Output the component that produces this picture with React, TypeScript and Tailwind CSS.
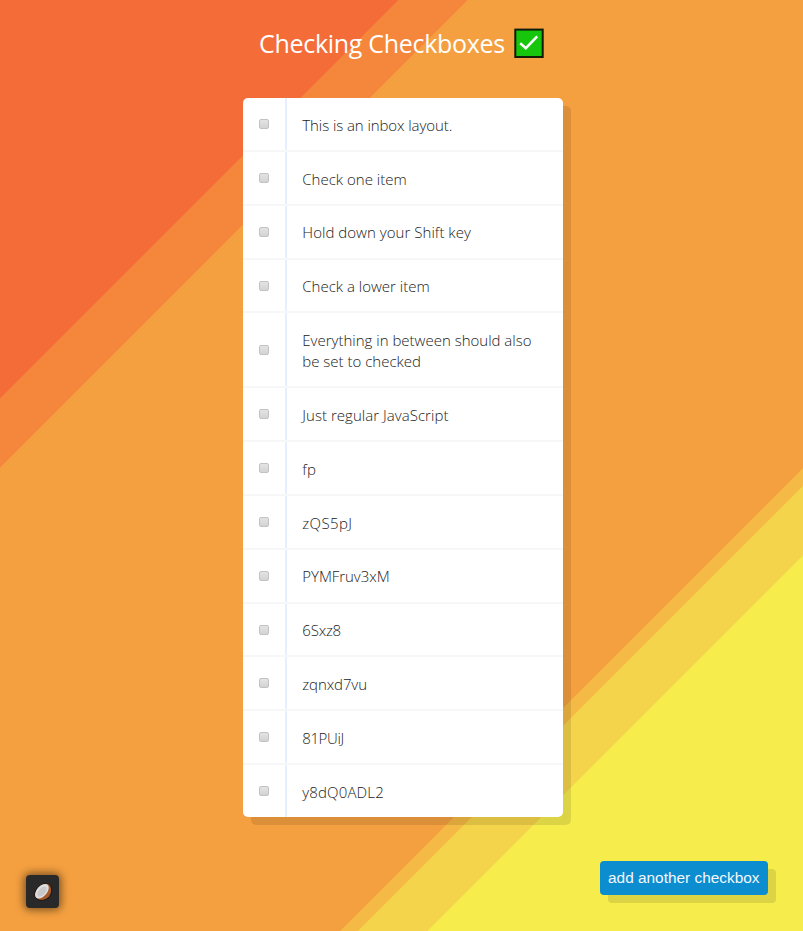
type Item = { text: string; height: string; tracking: string };

const items: Item[] = [
  { text: "This is an inbox layout.", height: "h-[53.8px]", tracking: "tracking-[-0.08px]" },
  { text: "Check one item", height: "h-[53.8px]", tracking: "tracking-[0px]" },
  { text: "Hold down your Shift key", height: "h-[53.8px]", tracking: "tracking-[0.04px]" },
  { text: "Check a lower item", height: "h-[53.8px]", tracking: "tracking-[0px]" },
  { text: "Everything in between should also be set to checked", height: "h-[75px]", tracking: "tracking-[0px]" },
  { text: "Just regular JavaScript", height: "h-[53.8px]", tracking: "tracking-[0.04px]" },
  { text: "fp", height: "h-[53.8px]", tracking: "tracking-[0.2px]" },
  { text: "zQS5pJ", height: "h-[53.8px]", tracking: "tracking-[0.4px]" },
  { text: "PYMFruv3xM", height: "h-[53.8px]", tracking: "tracking-[-0.05px]" },
  { text: "6Sxz8", height: "h-[53.8px]", tracking: "tracking-[-0.2px]" },
  { text: "zqnxd7vu", height: "h-[53.8px]", tracking: "tracking-[-0.1px]" },
  { text: "81PUiJ", height: "h-[53.8px]", tracking: "tracking-[-0.4px]" },
  { text: "y8dQ0ADL2", height: "h-[52.3px]", tracking: "tracking-[0.15px]" },
];

function Row({ item }: { item: Item }) {
  return (
    <label className={`flex border-b-2 border-[#f7f7f7] last:border-b-0 ${item.height}`}>
      <span className="flex w-[44px] shrink-0 items-center border-r-2 border-[#e5efff] pl-4">
        <input
          type="checkbox"
          className="h-[10px] w-[10px] appearance-none rounded-[2px] border border-[#c2c2c2] bg-linear-to-b from-[#e4e4e4] to-[#d3d3d3]"
        />
      </span>
      <span
        className={`flex-1 self-center pt-[2.4px] pl-[15px] pr-4 font-['Open_Sans',sans-serif] text-[15px] leading-[21px] font-light text-[#222] ${item.tracking}`}
      >
        {item.text}
      </span>
    </label>
  );
}

function CheckEmoji() {
  return (
    <svg className="h-[30px] w-[30px]" viewBox="0 0 30 30">
      <rect x="1.3" y="1.6" width="27.4" height="27.4" fill="#16c60c" stroke="#101c08" strokeWidth="2" />
      <path d="M6.2 15.2 11.8 20.2 23.2 8.4" fill="none" stroke="#fff" strokeWidth="2.5" />
    </svg>
  );
}

function Coconut() {
  return (
    <svg className="h-[20px] w-[20px]" viewBox="0 0 20 20">
      <path
        d="M15.6 1.9C19.4 4.4 19.6 10.4 16.5 14.4 13.2 18.6 7.4 19.8 3.6 16.6 .2 13.6 1.6 8.4 5.8 4.8 9 2 13.2.4 15.6 1.9Z"
        fill="#a65b2d"
        stroke="#15110f"
        strokeWidth="1"
      />
      <ellipse cx="8.9" cy="9.2" rx="8.6" ry="5.1" transform="rotate(-49 8.9 9.2)" fill="#dedede" />
      <ellipse cx="9" cy="9.6" rx="6" ry="3.3" transform="rotate(-49 9 9.6)" fill="#c9c9cb" />
    </svg>
  );
}

export default function App() {
  return (
    <div className="flex h-[931px] w-[803px] flex-col overflow-hidden bg-[linear-gradient(135deg,#f46c38_281.6px,#f4873c_282px,#f4873c_330.6px,#f5a040_331px,#f5a040_898.5px,#f4ba45_899px,#f4ba45_911.2px,#f4d44a_911.7px,#f4d44a_960.4px,#f6ed4d_960.9px)]">
      <h1 className="flex h-[98.3px] shrink-0 pt-7 pl-[259px] font-['Open_Sans',sans-serif] text-[25px] leading-[30px] tracking-[-0.3px] text-white">
        <span className="w-[255px] whitespace-nowrap">Checking Checkboxes</span>
        <CheckEmoji />
      </h1>
      <main className="ml-[243.3px] h-[719px] w-[320.2px] shrink-0 rounded-[5px] bg-white shadow-[8px_8px_0_rgba(0,0,0,0.1)]">
        {items.map((item) => (
          <Row key={item.text} item={item} />
        ))}
      </main>
      <footer className="flex items-start justify-between pt-[44px] pr-[35.5px] pl-[26px]">
        <button className="mt-[14px] flex h-[33px] w-[33px] items-center justify-center rounded-[4px] bg-[#292929] shadow-[0_0_9px_2px_rgba(0,0,0,0.5)]">
          <Coconut />
        </button>
        <button className="h-[34px] w-[167.5px] rounded-[4px] bg-[#0c8dcf] pb-px text-center font-['Liberation_Sans',Arial,sans-serif] text-[15.4px] whitespace-nowrap text-[#f4f8fb] shadow-[8px_8px_0_rgba(0,0,0,0.1)]">
          add another checkbox
        </button>
      </footer>
    </div>
  );
}
